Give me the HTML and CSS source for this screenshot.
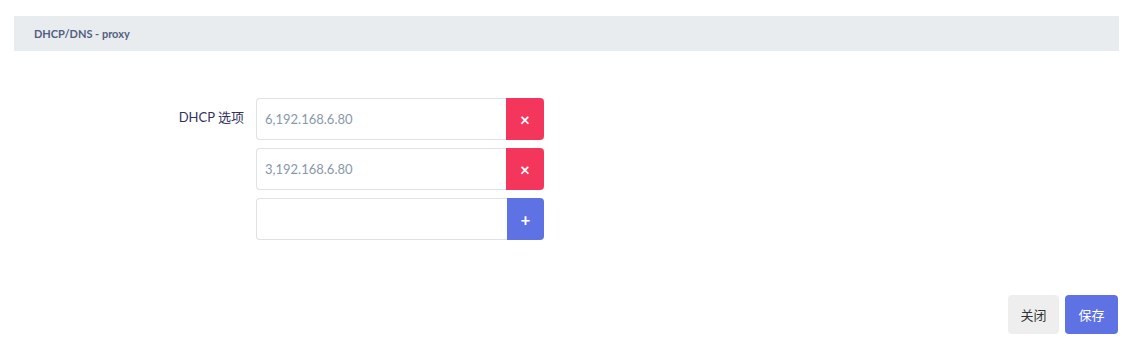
FILE: index.html
```html
<!DOCTYPE html>
<html lang="zh-CN">

<head>
	<meta charset="UTF-8" />
	<meta name="viewport" content="width=device-width, initial-scale=1.0" />
	<title>DHCP/DNS - proxy</title>
	<link rel="stylesheet" href="styles.css">
</head>

<body>
	<div class="panel">
		<div class="panel-header">DHCP/DNS - proxy</div>

		<div class="form-row">
			<label class="form-label">DHCP 选项</label>
			<div class="option-list">
				<div class="input-group">
					<input type="text" placeholder="6,192.168.6.80" />
					<button class="btn-remove">&times;</button>
				</div>
				<div class="input-group">
					<input type="text" placeholder="3,192.168.6.80" />
					<button class="btn-remove">&times;</button>
				</div>
				<div class="input-group">
					<input type="text" />
					<button class="btn-add">+</button>
				</div>
			</div>
		</div>

		<div class="panel-footer">
			<button class="btn btn-close">关闭</button>
			<button class="btn btn-save">保存</button>
		</div>
	</div>
</body>

</html>
```

FILE: styles.css
```css
body {
	margin: 0;
	padding: 16px 14px 0;
	font-family: 'Lato', 'Noto Sans CJK SC', sans-serif;
	background: #fff;
	color: #525f7f;
}

.panel-header {
	height: 35px;
	line-height: 35px;
	padding: 0 20px;
	background: #e9ecef;
	font-size: 11px;
	font-weight: 700;
	color: #525f7f;
}

.form-row {
	display: flex;
	gap: 12px;
	margin-top: 47px;
}

.form-label {
	width: 230px;
	text-align: right;
	font-size: 13px;
	padding-top: 9px;
	color: #32325d;
}

.option-list {
	display: flex;
	flex-direction: column;
	gap: 8px;
	width: 288px;
}

.input-group {
	display: flex;
	height: 42px;
}

.input-group input {
	flex: 1;
	min-width: 0;
	box-sizing: border-box;
	border: 1px solid #dee2e6;
	border-right: none;
	border-radius: 4px 0 0 4px;
	padding: 0 8px;
	font-family: inherit;
	font-size: 13px;
	color: #525f7f;
	outline: none;
}

.input-group input::placeholder {
	color: #8898aa;
}

.input-group button {
	width: 38px;
	border: none;
	border-radius: 0 4px 4px 0;
	color: #fff;
	font-family: inherit;
	font-size: 17px;
	font-weight: 700;
	padding: 0;
	cursor: pointer;
}

.btn-remove {
	background: #f5365c;
}

.btn-add {
	background: #5e72e4;
	width: 37px !important;
}

.panel-footer {
	display: flex;
	justify-content: flex-end;
	gap: 6px;
	margin-top: 55px;
	padding-right: 1px;
}

.btn {
	height: 39px;
	border: none;
	border-radius: 4px;
	font-family: inherit;
	font-size: 13px;
	cursor: pointer;
}

.btn-close {
	width: 51px;
	background: #eeeeee;
	color: #333;
}

.btn-save {
	width: 53px;
	background: #5e72e4;
	color: #fff;
}
```
